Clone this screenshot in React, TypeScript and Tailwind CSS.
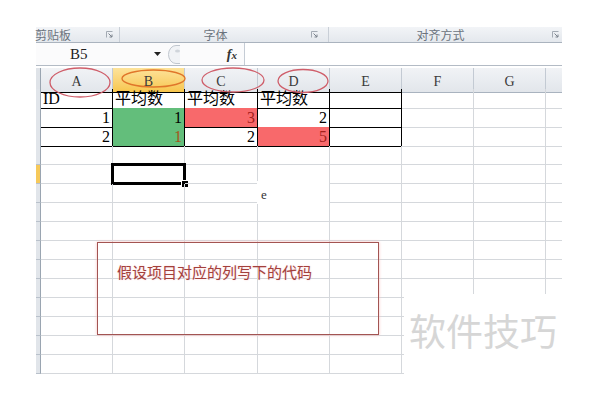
import React from 'react';
import clsx from 'clsx';

type Cell = { t?: string; right?: boolean; bg?: 'green' | 'red'; tone?: 'red' | 'brown' };

// A1:E3, the bordered block
const TABLE: Cell[][] = [
  [{ t: 'ID' }, { t: '平均数' }, { t: '平均数' }, { t: '平均数' }, {}],
  [
    { t: '1', right: true },
    { t: '1', right: true, bg: 'green' },
    { t: '3', right: true, bg: 'red', tone: 'red' },
    { t: '2', right: true },
    {},
  ],
  [
    { t: '2', right: true },
    { t: '1', right: true, bg: 'green', tone: 'brown' },
    { t: '2', right: true },
    { t: '5', right: true, bg: 'red', tone: 'red' },
    {},
  ],
];

const COLS = ['A', 'B', 'C', 'D', 'E', 'F', 'G', ''];
const ROWS = Array.from({ length: 15 }, (_, i) => i);

const gridCols = 'grid grid-cols-[5px_72px_72px_73px_72px_72px_72px_72px_16px]';

const Launcher = () => (
  <svg width="7" height="7" viewBox="0 0 7 7" className="shrink-0">
    <path d="M0.5 6.5 V0.5 H6.5" fill="none" stroke="#a3aab3" />
    <path d="M2.5 2.5 L6 6 M6 3.5 V6 H3.5" fill="none" stroke="#7a828c" />
  </svg>
);

const Ribbon = () => (
  <div className="flex h-[16px] border-b border-b-[#aab3be] bg-gradient-to-b from-[#f2f4f7] to-[#e4e8ed] text-[12px] leading-[14px] text-[#6b737d] [font-family:Noto_Sans_CJK_SC,sans-serif]">
    <div className="flex w-[84px] items-center justify-between pr-[6px] border-r border-r-[#c9cfd7]">
      <span className="-ml-[1px]">剪贴板</span>
      <Launcher />
    </div>
    <div className="flex w-[209px] items-center pr-[10px] border-r border-r-[#c9cfd7]">
      <span className="flex-1 text-center">字体</span>
      <Launcher />
    </div>
    <div className="flex flex-1 items-center pr-[3px]">
      <span className="flex-1 text-center">对齐方式</span>
      <Launcher />
    </div>
  </div>
);

const FormulaBar = () => (
  <div className="flex h-[23px] border-b border-b-[#b3bbc5] bg-[#fbfbfc]">
    <div className="flex w-[129px] items-center justify-between pl-[34px] pr-[4px] [font-family:Liberation_Serif,serif] text-[15px] text-[#222]">
      <span>B5</span>
      <svg width="7" height="4" viewBox="0 0 7 4">
        <path d="M0 0 H7 L3.5 4 Z" fill="#222" />
      </svg>
    </div>
    <div className="flex w-[80px] items-center justify-between pl-[3px] pr-[7px] border-r border-r-[#c5ccd5]">
      <svg width="14" height="19" viewBox="0 0 14 19">
        <path d="M12 0.5 H8 A7.5 9 0 0 0 8 18.5 H12" fill="#f1f3f6" stroke="#c0c6ce" />
        <ellipse cx="9.5" cy="6" rx="2.5" ry="1.5" fill="#d0d5db" />
      </svg>
      <span className="[font-family:Liberation_Serif,serif] text-[14px] font-bold italic text-[#333]">
        f<span className="text-[11px]">x</span>
      </span>
    </div>
    <div className="flex-1 bg-white" />
  </div>
);

const HeaderRow = () => (
  <div className={clsx(gridCols, 'h-[21px]')}>
    <div className="bg-[#dfe3e8] border-r border-r-[#9aa5b1] border-b border-b-[#9aa5b1]" />
    {COLS.map((c, i) => (
      <div
        key={i}
        className={clsx(
          'flex items-center justify-center pt-[3px] [font-family:Liberation_Serif,serif] text-[14px] text-[#3a3a3a] border-b',
          i === 1 ? 'bg-gradient-to-b from-[#fde39a] to-[#f7c64c]' : 'bg-gradient-to-b from-[#f1f3f6] to-[#e2e6eb]',
          i < 5 ? 'border-b-black' : 'border-b-[#a9b3bf]',
          i < 7 && 'border-r border-r-[#c3cad3]'
        )}
      >
        {c}
      </div>
    ))}
  </div>
);

const BodyRow = ({ r }: { r: number }) => (
  <div className={clsx(gridCols, 'h-[19px]')}>
    <div
      className={clsx(
        'border-r border-r-[#9aa5b1] border-b border-b-[#b9c1cb]',
        r === 4 ? 'bg-[#f6c95a]' : 'bg-[#e1e5ea]'
      )}
    />
    {COLS.map((_, c) => {
      const inTable = r < 3 && c < 5;
      const cell: Cell = inTable ? TABLE[r][c] : {};
      const selected = r === 4 && c === 1;
      return (
        <div
          key={c}
          className={clsx(
            'relative flex items-center whitespace-nowrap px-[2px] pt-[1px] [font-family:Liberation_Serif,Noto_Sans_CJK_SC,serif] text-[16px] leading-[18px] border-b',
            c < 7 && 'border-r',
            inTable ? 'border-black' : 'border-[#d5d8dc]',
            cell.right ? 'justify-end' : 'justify-start',
            cell.bg === 'green' && 'bg-[#63be7b]',
            cell.bg === 'red' && 'bg-[#f8696b]',
            cell.tone === 'red' ? 'text-[#a3201c]' : cell.tone === 'brown' ? 'text-[#a4561c]' : 'text-black'
          )}
        >
          {cell.t}
          {selected && (
            <>
              <div className="absolute -left-[2px] -top-[2px] h-[22px] w-[75px] border-[3px] border-black" />
              <div className="absolute -bottom-[4px] -right-[4px] h-[6px] w-[6px] bg-black ring-1 ring-white" />
            </>
          )}
        </div>
      );
    })}
  </div>
);

const Annotations = () => (
  <svg className="pointer-events-none absolute left-0 top-0" width="600" height="400" viewBox="0 0 600 400">
    <ellipse cx="80" cy="82.5" rx="30" ry="14.5" fill="none" stroke="#cf5e6a" strokeWidth="1.3" />
    <ellipse cx="153.5" cy="78.5" rx="31.5" ry="8.5" fill="none" stroke="#e0762a" strokeWidth="1.4" />
    <ellipse cx="233" cy="80" rx="31" ry="12" fill="none" stroke="#cf5e6a" strokeWidth="1.3" />
    <ellipse cx="303" cy="81" rx="25" ry="11.5" fill="none" stroke="#cf5e6a" strokeWidth="1.3" />
  </svg>
);

const App: React.FC = () => {
  return (
    <div className="relative h-[400px] w-[600px] overflow-hidden bg-white">
      <div className="ml-[36px] w-[526px] pt-[27px]">
        <Ribbon />
        <FormulaBar />
        <div className="h-[2px]" />
        <HeaderRow />
        {ROWS.map((r) => (
          <BodyRow key={r} r={r} />
        ))}
      </div>

      <Annotations />

      {/* small text box with the stray "e" */}
      <div className="absolute left-[257px] top-[181px] h-[23px] w-[72px] bg-white pl-[4px] pt-[7px] [font-family:Liberation_Serif,serif] text-[13px] leading-none text-[#333]">
        e
      </div>

      {/* callout box */}
      <div className="absolute left-[97px] top-[242px] h-[93px] w-[282px] border border-[#a35452] shadow-[0_0_3px_#f6c0c0]">
        <div className="pl-[19px] pt-[18px] [font-family:Noto_Sans_CJK_SC,sans-serif] text-[15px] text-[#a3403c] [text-shadow:0_0_2px_#f8cfcf]">
          假设项目对应的列写下的代码
        </div>
      </div>

      {/* watermark */}
      <div className="absolute left-[404px] top-[294px] h-[106px] w-[196px] bg-white pl-[5px] pt-[18px] [font-family:Noto_Sans_CJK_SC,sans-serif] text-[37px] leading-none text-[#d6d6d6]">
        软件技巧
      </div>
    </div>
  );
};

export default App;
